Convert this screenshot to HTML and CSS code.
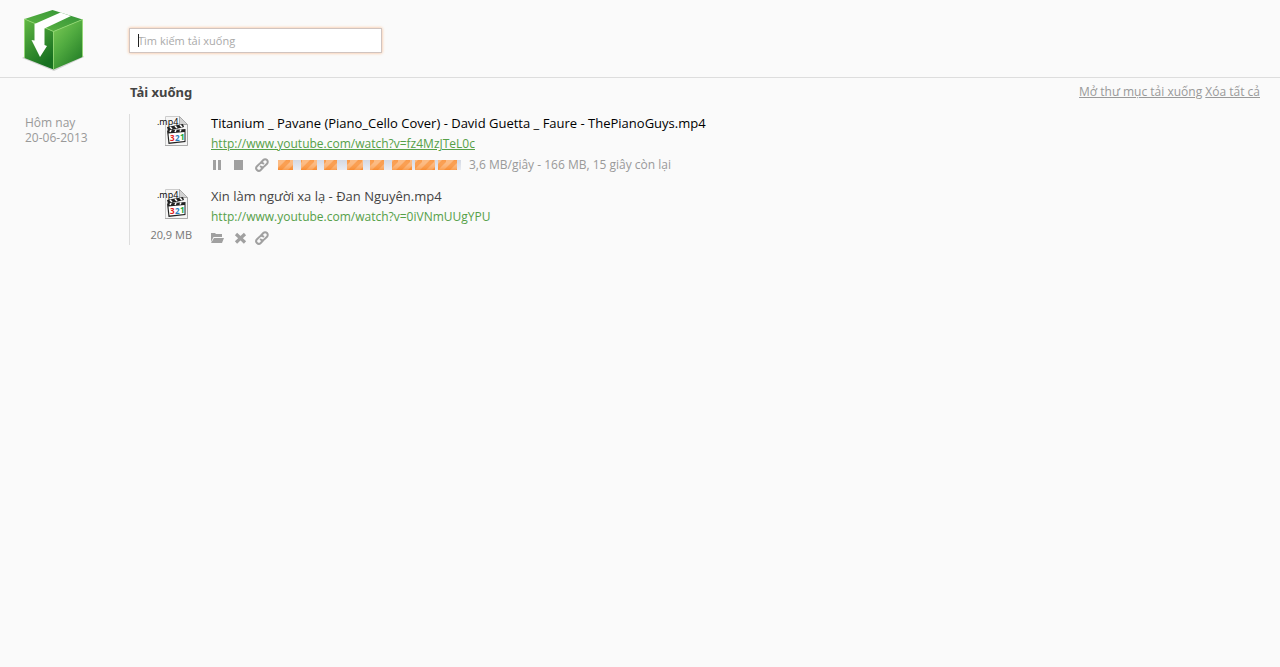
FILE: index.html
```
<!DOCTYPE html>
<html lang="vi">
<head>
    <meta charset="UTF-8">
    <meta name="viewport" content="width=device-width, initial-scale=1.0">
    <title>Tải xuống</title>
    <link rel="stylesheet" href="styles.css">
</head>
<body>
    <!-- shared icons -->
    <svg class="sprite" viewBox="0 0 34 34" aria-hidden="true">
        <symbol id="icon-link" viewBox="0 0 14 14">
            <g fill="none" stroke="currentColor" stroke-width="2" stroke-linecap="round">
                <path d="M6.2 4.2 8.3 2a2.6 2.6 0 0 1 3.7 3.7L9.3 8.4a2.6 2.6 0 0 1-3.6.1"/>
                <path d="M7.8 9.8 5.7 12A2.6 2.6 0 0 1 2 8.3l2.7-2.7a2.6 2.6 0 0 1 3.6-.1"/>
            </g>
        </symbol>
        <symbol id="icon-mp4" viewBox="0 0 34 34">
            <path d="M10.500 2.500h14l8 8v21h-22z" fill="#f5f5f5" stroke="#ccc"/>
            <path d="M24.500 2.500v8h8z" fill="#d2d2d2" stroke="#aaa"/>
            <path d="M10 31.500h22.500v-21" fill="none" stroke="#aaa"/>
            <path d="m12 13 16-3 1 3-16 4z" fill="#222"/>
            <path d="m15 13 2 2M20 12l2 2M25 11l2 2" stroke="#fff" stroke-width="1.500"/>
            <path d="M12 16.500 30.500 15v13L13.500 30z" fill="#222"/>
            <path d="m16 16-1 2M21 16l-1 2M26 15.500l-1 2" stroke="#fff" stroke-width="1.500"/>
            <path d="M13.500 19.500 29.500 18v9l-15 1.500z" fill="#fff"/>
        </symbol>
    </svg>

    <header class="header">
        <svg class="logo" viewBox="0 0 64 64" aria-hidden="true">
            <defs>
                <linearGradient id="left" x1="0" y1="0" x2=".5" y2="1">
                    <stop offset="0" stop-color="#62b944"/>
                    <stop offset="1" stop-color="#177020"/>
                </linearGradient>
                <linearGradient id="right" x1="0" y1="0" x2=".7" y2="1">
                    <stop offset="0" stop-color="#7fcc58"/>
                    <stop offset=".5" stop-color="#51ab40"/>
                    <stop offset="1" stop-color="#268028"/>
                </linearGradient>
                <linearGradient id="top" x1="0" y1="1" x2="1" y2="0">
                    <stop offset="0" stop-color="#62b944"/>
                    <stop offset="1" stop-color="#2f9036"/>
                </linearGradient>
            </defs>
            <path d="m1 50 3-2 28 8 29-10 2 3-30 14z" fill="#999" opacity=".4"/>
            <path d="M3.500 11 32.500 23.500v38L3.500 50z" fill="url(#left)"/>
            <path d="m32.500 23.500 29-12V49l-29 12.500z" fill="url(#right)"/>
            <path d="m3.500 11 28-9 30 9.500-29 12z" fill="url(#top)"/>
            <path d="m3.500 50V11l29 12.500 29-12V49M32.500 23.500v38" fill="none" stroke="#93da70" opacity=".8"/>
            <path d="m13.500 16 26-11.500L50 8 23.500 20.500V37l2.500 1-7 11-8.500-17 3 .500z" fill="#fff"/>
        </svg>
        <form class="search">
            <input class="search-input" type="search" placeholder="Tìm kiếm tải xuống" aria-label="Tìm kiếm tải xuống">
        </form>
    </header>

    <main>
        <div class="heading">
            <h1 class="title">Tải xuống</h1>
            <nav class="actions">
                <a href="#">Mở thư mục tải xuống</a>
                <a href="#">Xóa tất cả</a>
            </nav>
        </div>

        <section class="day">
            <div class="date">Hôm nay<br>20-06-2013</div>
            <div class="downloads">
                <article class="download">
                    <div class="file">
                        <svg class="file-icon" viewBox="0 0 34 34">
                            <use href="#icon-mp4"/>
                            <text class="digit" x="15" y="27" fill="#e02020">3</text>
                            <text class="digit" x="20" y="27" fill="#2480c0">2</text>
                            <text class="digit" x="25" y="26" fill="#20a838">1</text>
                            <text class="extension" x="2" y="11">.mp4</text>
                        </svg>
                    </div>
                    <div class="info">
                        <div class="name active">Titanium _ Pavane (Piano_Cello Cover) - David Guetta _ Faure - ThePianoGuys.mp4</div>
                        <a class="url hovered" href="#">http://www.youtube.com/watch?v=fz4MzJTeL0c</a>
                        <div class="controls">
                            <button class="control" type="button" aria-label="Tạm dừng">
                                <svg viewBox="0 0 14 14"><path d="M2 2h3v10H2zM7 2h3v10H7z" fill="currentColor"/></svg>
                            </button>
                            <button class="control" type="button" aria-label="Dừng">
                                <svg viewBox="0 0 14 14"><path d="M1 2h9v10H1z" fill="currentColor"/></svg>
                            </button>
                            <button class="control" type="button" aria-label="Sao chép liên kết">
                                <svg><use href="#icon-link"/></svg>
                            </button>
                            <svg class="progress" viewBox="0 0 183 10" role="img" aria-label="Tiến trình">
                                <defs>
                                    <linearGradient id="track" x2="0" y2="1">
                                        <stop offset="0" stop-color="#d4d9e4"/>
                                        <stop offset="1" stop-color="#e9ecf3"/>
                                    </linearGradient>
                                    <linearGradient id="shade" x2="0" y2="1">
                                        <stop offset="0" stop-color="#fff" stop-opacity=".1"/>
                                        <stop offset="1" stop-color="#f98a2c" stop-opacity=".5"/>
                                    </linearGradient>
                                    <pattern id="stripes" width="12" height="10" patternUnits="userSpaceOnUse">
                                        <path d="M0 0h12v10H0z" fill="#fbb273"/>
                                        <path d="M8 0h4v2L4 10h-4V8zM0 0v2-2zM12 8v2h-2z" fill="#f98f35"/>
                                    </pattern>
                                </defs>
                                <path d="M0 0h183v10H0z" fill="url(#track)"/>
                                <path d="M0 0h15v10H0zM23 0h16v10H23zM46 0h13v10H46zM69 0h16v10H69zM92 0h14v10H92zM114 0h20v10H114zM137 0h20v10H137zM160 0h19v10H160z" fill="url(#stripes)"/>
                                <path d="M0 0h15v10H0zM23 0h16v10H23zM46 0h13v10H46zM69 0h16v10H69zM92 0h14v10H92zM114 0h20v10H114zM137 0h20v10H137zM160 0h19v10H160z" fill="url(#shade)"/>
                            </svg>
                            <span class="status">3,6 MB/giây - 166 MB, 15 giây còn lại</span>
                        </div>
                    </div>
                </article>

                <article class="download">
                    <div class="file">
                        <svg class="file-icon" viewBox="0 0 34 34">
                            <use href="#icon-mp4"/>
                            <text class="digit" x="15" y="27" fill="#e02020">3</text>
                            <text class="digit" x="20" y="27" fill="#2480c0">2</text>
                            <text class="digit" x="25" y="26" fill="#20a838">1</text>
                            <text class="extension" x="2" y="11">.mp4</text>
                        </svg>
                        <div class="size">20,9 MB</div>
                    </div>
                    <div class="info">
                        <div class="name">Xin làm người xa lạ - Đan Nguyên.mp4</div>
                        <a class="url" href="#">http://www.youtube.com/watch?v=0iVNmUUgYPU</a>
                        <div class="controls">
                            <button class="control" type="button" aria-label="Mở thư mục">
                                <svg viewBox="0 0 14 14"><path d="M0 2h4l1 1h6v3H2.500L0 11zM3 7h10l-2 5H0z" fill="currentColor"/></svg>
                            </button>
                            <button class="control" type="button" aria-label="Xóa">
                                <svg viewBox="0 0 14 14"><path d="m3 3 9 8.500M12 3l-9 8.500" stroke="currentColor" stroke-width="3.200"/></svg>
                            </button>
                            <button class="control" type="button" aria-label="Sao chép liên kết">
                                <svg><use href="#icon-link"/></svg>
                            </button>
                        </div>
                    </div>
                </article>
            </div>
        </section>
    </main>
</body>
</html>
```
FILE: styles.css
```
* {
    box-sizing: border-box;
}
body {
    margin: 0;
    background: #fafafa;
    color: #444;
    font-family: "Open Sans", "Noto Sans", sans-serif;
    font-size: 12px;
}
.sprite {
    position: absolute;
    width: 0;
    height: 0;
}
.header {
    display: flex;
    align-items: center;
    padding: 8px 21px 5px;
    border-bottom: 1px solid #ddd;
}
.logo {
    width: 64px;
    height: 64px;
    margin-right: 44px;
}
.search {
    position: relative;
    width: 253px;
}
.search-input {
    display: block;
    width: 100%;
    height: 25px;
    padding: 0 8px;
    border: 1px solid #d0c4c0;
    border-radius: 0;
    outline: none;
    background: #fff;
    box-shadow: 0 0 3px #f9b98a;
    font: 11px "Open Sans", "Noto Sans", sans-serif;
    appearance: none;
}
.search-input::placeholder {
    color: #aaa;
}
/* text cursor */
.search::after {
    content: "";
    position: absolute;
    top: 6px;
    left: 9px;
    width: 1px;
    height: 13px;
    background: #222;
}
.heading {
    display: flex;
    justify-content: space-between;
    height: 36px;
    padding: 4px 20px 0 130px;
}
.title {
    margin: 0;
    font-family: "Noto Sans", "Open Sans", sans-serif;
    font-size: 13px;
    line-height: 20px;
}
.actions {
    line-height: 20px;
}
.actions a {
    color: #999;
}
.day {
    display: flex;
}
.date {
    width: 129px;
    padding: 1px 0 0 25px;
    color: #999;
    line-height: 15px;
}
.downloads {
    flex: 1;
    display: flex;
    flex-direction: column;
    gap: 15px;
    border-left: 1px solid #ddd;
}
.download {
    display: flex;
    min-height: 58px;
}
.file {
    width: 62px;
    margin-right: 19px;
    color: #777;
    font-size: 11px;
    text-align: right;
}
.file-icon {
    display: block;
    width: 34px;
    height: 34px;
    margin: 0 3px 0 auto;
}
.digit {
    font-size: 8px;
    font-weight: 700;
    text-anchor: start;
}
.extension {
    font-size: 9px;
    fill: #000;
    text-anchor: start;
}
.size {
    margin-top: 6px;
    line-height: 16px;
}
.name {
    font-size: 13px;
    line-height: 18px;
}
.name.active {
    color: #000;
}
.url {
    display: block;
    width: fit-content;
    color: #55a048;
    line-height: 24px;
    text-decoration: none;
}
.url.hovered,
.url:hover {
    text-decoration: underline;
}
.controls {
    display: flex;
    align-items: center;
    height: 14px;
    margin-top: 2px;
    color: #999;
}
.control {
    width: 14px;
    height: 14px;
    margin-right: 8px;
    padding: 0;
    border: 0;
    background: none;
    color: #a0a0a0;
    cursor: pointer;
}
.control svg {
    display: block;
    width: 14px;
    height: 14px;
}
.progress {
    width: 183px;
    height: 10px;
    margin: 0 8px 0 1px;
}
.status {
    line-height: 14px;
}
```
